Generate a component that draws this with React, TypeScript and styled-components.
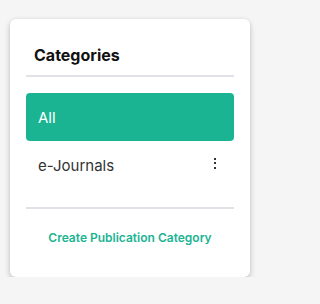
import styled, { createGlobalStyle } from 'styled-components'

const GlobalStyle = createGlobalStyle`
   body {
      margin: 0;
      background: #f5f5f5;
      font-family: Inter, "Noto Sans", sans-serif;
   }
`

const Page = styled.div`
   padding: 19px 0 0 10px;
`

const Card = styled.div`
   width: 240px;
   height: 258px;
   box-sizing: border-box;
   background: #fff;
   border-radius: 6px;
   box-shadow: 0 3px 6px rgba(0, 0, 0, 0.2), 0 0 4px rgba(0, 0, 0, 0.06);
   padding: 0 16px;
   display: flex;
   flex-direction: column;
`

const Title = styled.div`
   height: 56px;
   box-sizing: border-box;
   display: flex;
   align-items: flex-end;
   padding: 0 8px 10px;
   font-size: 16px;
   line-height: 19px;
   font-weight: 700;
   color: #111;
`

const Divider = styled.div`
   height: 2px;
   background: #e1e1e7;
`

const List = styled.div`
   display: flex;
   flex-direction: column;
   margin: 16px 0 18px;
`

type ItemProps = {
   $active: boolean
}

const Item = styled.div<ItemProps>`
   height: 48px;
   display: flex;
   align-items: center;
   justify-content: space-between;
   padding: 0 12px;
   border-radius: 4px;
   font-size: 15px;
   background: ${props => props.$active ? '#1bb493' : 'transparent'};
   color: ${props => props.$active ? '#fff' : '#333'};
`

const Kebab = styled.div`
   display: flex;
   flex-direction: column;
   gap: 2.5px;
   margin-right: 6px;
   margin-top: -4px;

   span {
      width: 2px;
      height: 2px;
      background: #333;
   }
`

const Footer = styled.div`
   flex: 1;
   display: flex;
   justify-content: center;
   padding-top: 21px;
   font-size: 12px;
   font-weight: 600;
   color: #1bb493;
`

const categories = [
   { id: 'all', name: 'All', menu: false },
   { id: 'ej', name: 'e-Journals', menu: true },
]

export default function App() {
   return (
      <>
         <GlobalStyle />
         <Page>
            <Card>
               <Title>Categories</Title>
               <Divider />
               <List>
                  {categories.map((c, i) => (
                     <Item key={c.id} $active={i === 0}>
                        {c.name}
                        {c.menu && <Kebab><span /><span /><span /></Kebab>}
                     </Item>
                  ))}
               </List>
               <Divider />
               <Footer>Create Publication Category</Footer>
            </Card>
         </Page>
      </>
   )
}
